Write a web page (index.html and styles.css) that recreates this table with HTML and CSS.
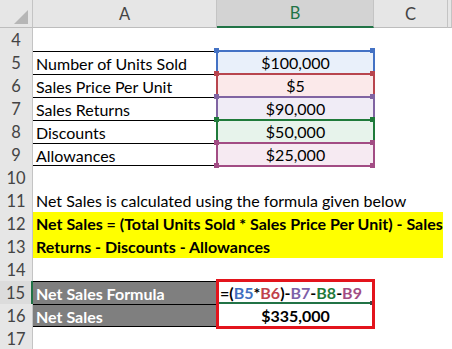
FILE: index.html
```html
<!DOCTYPE html>
<html>
<head>
<meta charset="utf-8">
<link rel="stylesheet" href="styles.css">
</head>
<body>
<div class="sheet">
  <div class="corner"><span class="tri"></span></div>
  <div class="colh">A</div>
  <div class="colh sel">B</div>
  <div class="colh">C</div>
  <div class="colh"></div>

  <div class="rh">4</div><div class="c"></div><div class="c"></div><div class="c"></div><div class="c"></div>

  <div class="rh">5</div><div class="c lab">Number of Units Sold</div><div class="c v blue">$100,000</div><div class="c"></div><div class="c"></div>
  <div class="rh">6</div><div class="c lab">Sales Price Per Unit</div><div class="c v red">$5</div><div class="c"></div><div class="c"></div>
  <div class="rh">7</div><div class="c lab">Sales Returns</div><div class="c v purple">$90,000</div><div class="c"></div><div class="c"></div>
  <div class="rh">8</div><div class="c lab">Discounts</div><div class="c v green">$50,000</div><div class="c"></div><div class="c"></div>
  <div class="rh">9</div><div class="c lab last">Allowances</div><div class="c v plum last">$25,000</div><div class="c"></div><div class="c"></div>

  <div class="rh">10</div><div class="c"></div><div class="c"></div><div class="c"></div><div class="c"></div>

  <div class="rh">11</div><div class="c wide">Net Sales is calculated using the formula given below</div><div class="c"></div>

  <div class="rh">12</div><div class="c note">Net Sales = (Total Units Sold * Sales Price Per Unit) - Sales<br>Returns - Discounts - Allowances</div><div class="c"></div>
  <div class="rh">13</div><div class="c"></div>

  <div class="rh">14</div><div class="c"></div><div class="c"></div><div class="c"></div><div class="c"></div>

  <div class="rh selrow">15</div><div class="c dark">Net Sales Formula</div><div class="c formula">=(<span class="f-blue">B5</span>*<span class="f-red">B6</span>)-<span class="f-purple">B7</span>-<span class="f-green">B8</span>-<span class="f-plum">B9</span></div><div class="c"></div><div class="c"></div>
  <div class="rh">16</div><div class="c dark last">Net Sales</div><div class="c result">$335,000</div><div class="c"></div><div class="c"></div>

  <div class="rh">17</div><div class="c"></div><div class="c"></div><div class="c"></div><div class="c"></div>

  <div class="redbox"></div>
</div>
</body>
</html>
```

FILE: styles.css
```css
* { box-sizing: border-box; }
body {
  margin: 0;
  background: #ffffff;
  font-family: Lato, "Liberation Sans", sans-serif;
}
.sheet {
  position: relative;
  display: grid;
  grid-template-columns: 33px 184px 157px 74px 4px;
  grid-template-rows: 28px repeat(14, 23px);
  width: 452px;
  height: 349px;
  overflow: hidden;
  font-size: 16px;
  color: #000;
}
.corner {
  position: relative;
  background: #e6e6e6;
  border-right: 1px solid #c4c4c4;
  border-bottom: 1px solid #bdbdbd;
}
.tri {
  position: absolute;
  right: 4px;
  bottom: 3px;
  width: 0;
  height: 0;
  border-left: 14px solid transparent;
  border-bottom: 14px solid #b6b6b6;
}
.colh {
  display: flex;
  align-items: center;
  justify-content: center;
  background: #e6e6e6;
  border-right: 1px solid #c4c4c4;
  border-bottom: 1px solid #bdbdbd;
  color: #444;
  font-size: 16.5px;
}
.colh.sel {
  background: #d3d3d3;
  color: #217346;
  border-bottom: 2px solid #217346;
}
.rh {
  grid-column: 1;
  background: #e6e6e6;
  border-right: 1px solid #c4c4c4;
  color: #444;
  text-align: center;
  line-height: 24px;
  font-size: 16.5px;
}
.rh.selrow {
  background: #dcdcdc;
  border-right: 2px solid #217346;
}
.c {
  padding: 1px 3px 0;
  line-height: 22px;
  white-space: nowrap;
}
.lab {
  border-top: 1px solid #000;
}
.lab.last, .dark.last {
  border-bottom: 1px solid #000;
}
.v {
  position: relative;
  text-align: center;
}
.v::after {
  content: "";
  position: absolute;
  top: -1px;
  left: -1px;
  right: -1px;
  bottom: -1px;
  border: 2px solid var(--bc);
}
.v::before {
  content: "";
  position: absolute;
  z-index: 2;
  top: -3px;
  left: -3px;
  width: 5px;
  height: 5px;
  background: var(--bc);
  box-shadow: 156px 0 0 var(--bc);
}
.v.last::before {
  box-shadow: 156px 0 0 var(--bc), 0 23px 0 var(--bc), 156px 23px 0 var(--bc);
}
.blue { --bc: #4472c4; background: #e9f0fa; }
.red { --bc: #b8454e; background: #fbe9ea; }
.purple { --bc: #8064a2; background: #f0ecf6; }
.green { --bc: #1f7a3a; background: #e7f3eb; }
.plum { --bc: #a24c84; background: #f6eaf2; }

.wide {
  grid-column: span 3;
}
.note {
  grid-column: span 3;
  grid-row: span 2;
  margin-right: 5px;
  padding-top: 0;
  background: #ffff00;
  font-weight: bold;
  line-height: 23px;
  white-space: nowrap;
}
.dark {
  background: #7f7f7f;
  color: #ffffff;
  font-weight: bold;
  border-top: 1px solid #000;
}
.formula {
  position: relative;
  font-weight: bold;
  border-bottom: 2px solid #217346;
  padding-left: 3px;
}
.formula::after {
  content: "";
  position: absolute;
  right: 0;
  bottom: -3px;
  width: 4px;
  height: 4px;
  background: #444;
}
.result {
  font-weight: bold;
  text-align: center;
}
.f-blue { color: #3f6fc0; }
.f-red { color: #c0424b; }
.f-purple { color: #7d60a8; }
.f-green { color: #1f7a3a; }
.f-plum { color: #a24c84; }

.redbox {
  position: absolute;
  left: 216px;
  top: 279px;
  width: 159px;
  height: 50px;
  border: 3px solid #e3141c;
}
```
